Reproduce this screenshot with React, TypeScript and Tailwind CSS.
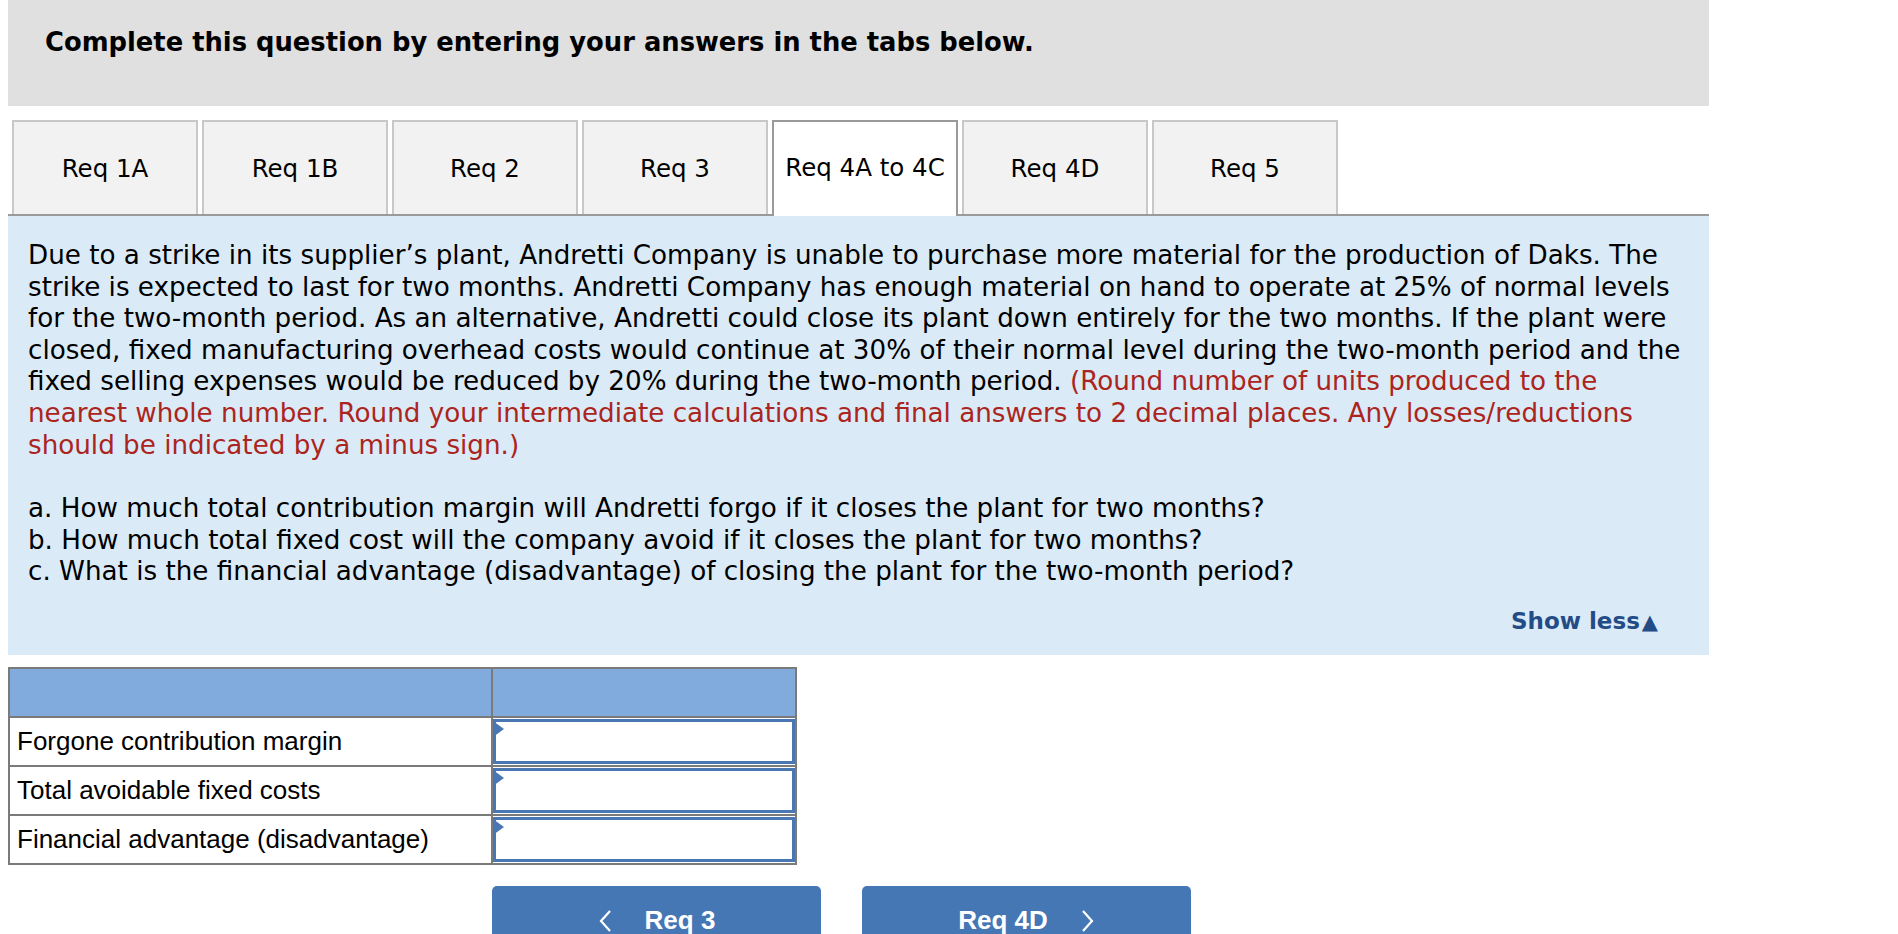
import React from "react";

const verdana = { fontFamily: '"DejaVu Sans", Verdana, sans-serif' };
const arial = { fontFamily: '"Liberation Sans", Arial, Helvetica, sans-serif' };

const tabs = ["Req 1A", "Req 1B", "Req 2", "Req 3", "Req 4A to 4C", "Req 4D", "Req 5"];
const activeTab = 4;

const rows = ["Forgone contribution margin", "Total avoidable fixed costs", "Financial advantage (disadvantage)"];

function InputCell() {
  return (
    <div className="relative h-[45px] border-[3px] border-[#4a77b4] bg-white">
      <svg className="absolute left-[-3px] top-[-1px]" width="11" height="16" viewBox="0 0 11 16">
        <polygon points="0,0 11,8 0,16" fill="#4a77b4" />
      </svg>
    </div>
  );
}

export default function App() {
  return (
    <div className="min-h-screen bg-white text-black" style={verdana}>
      <div className="ml-[8px] w-[1701px]">
        <div className="h-[106px] bg-[#e0e0e0] pl-[37px] pt-[27px]">
          <div className="text-[25.8px] font-bold leading-[31px]">
            Complete this question by entering your answers in the tabs below.
          </div>
        </div>

        <div className="mt-[14px] flex gap-[4px] border-b-2 border-[#9a9a9a] pl-[4px]">
          {tabs.map((t, i) =>
            i === activeTab ? (
              <div
                key={t}
                className="relative z-10 -mb-[2px] flex h-[96px] w-[186px] items-center justify-center border-2 border-b-0 border-[#9a9a9a] bg-white pb-[2px] text-[24.5px]"
              >
                {t}
              </div>
            ) : (
              <div
                key={t}
                className="flex h-[94px] w-[186px] items-center justify-center border-2 border-b-0 border-[#c8c8c8] bg-[#f2f2f2] pt-[2px] text-[24.5px]"
              >
                {t}
              </div>
            )
          )}
        </div>

        <div className="bg-[#dbeaf7] px-[20px] pb-[16px] pt-[24px] text-[26.2px] leading-[31.6px]">
          <div className="whitespace-nowrap">
            <div>Due to a strike in its supplier’s plant, Andretti Company is unable to purchase more material for the production of Daks. The</div>
            <div>strike is expected to last for two months. Andretti Company has enough material on hand to operate at 25% of normal levels</div>
            <div>for the two-month period. As an alternative, Andretti could close its plant down entirely for the two months. If the plant were</div>
            <div>closed, fixed manufacturing overhead costs would continue at 30% of their normal level during the two-month period and the</div>
            <div>
              fixed selling expenses would be reduced by 20% during the two-month period.{" "}
              <span className="text-[#ab2520]">(Round number of units produced to the</span>
            </div>
            <div className="text-[#ab2520]">
              nearest whole number. Round your intermediate calculations and final answers to 2 decimal places. Any losses/reductions
            </div>
            <div className="text-[#ab2520]">should be indicated by a minus sign.)</div>
          </div>
          <div className="mt-[32px] whitespace-nowrap">
            <div>a. How much total contribution margin will Andretti forgo if it closes the plant for two months?</div>
            <div>b. How much total fixed cost will the company avoid if it closes the plant for two months?</div>
            <div>c. What is the financial advantage (disadvantage) of closing the plant for the two-month period?</div>
          </div>
          <div className="mt-[18px] flex justify-end pr-[31px]">
            <span className="text-[23px] font-bold text-[#234c86]">
              Show less<span className="ml-[2px] text-[21px]">▲</span>
            </span>
          </div>
        </div>

        <div className="mt-[12px]" style={arial}>
          <table className="border-collapse border-2 border-[#7a7a7a]">
            <tbody>
              <tr className="h-[49px] bg-[#82abdd]">
                <td className="w-[483px] border-2 border-[#7a7a7a]"></td>
                <td className="w-[304px] border-2 border-[#7a7a7a]"></td>
              </tr>
              {rows.map((r) => (
                <tr key={r} className="h-[49px]">
                  <td className="border-2 border-[#7a7a7a] pl-[7px] text-[26px] leading-[30px]">{r}</td>
                  <td className="border-2 border-[#7a7a7a] p-0">
                    <InputCell />
                  </td>
                </tr>
              ))}
            </tbody>
          </table>

          <div className="mt-[21px] flex gap-[41px] pl-[484px]">
            <div className="flex h-[70px] w-[329px] items-center justify-center gap-[33px] rounded-[5px] bg-[#4577b4] text-[26px] font-bold text-white">
              <svg width="14" height="22" viewBox="0 0 14 22">
                <polyline points="12,1 3,11 12,21" fill="none" stroke="white" strokeWidth="2.2" />
              </svg>
              <span>Req 3</span>
            </div>
            <div className="flex h-[70px] w-[329px] items-center justify-center gap-[33px] rounded-[5px] bg-[#4577b4] text-[26px] font-bold text-white">
              <span>Req 4D</span>
              <svg width="14" height="22" viewBox="0 0 14 22">
                <polyline points="2,1 11,11 2,21" fill="none" stroke="white" strokeWidth="2.2" />
              </svg>
            </div>
          </div>
        </div>
      </div>
    </div>
  );
}
